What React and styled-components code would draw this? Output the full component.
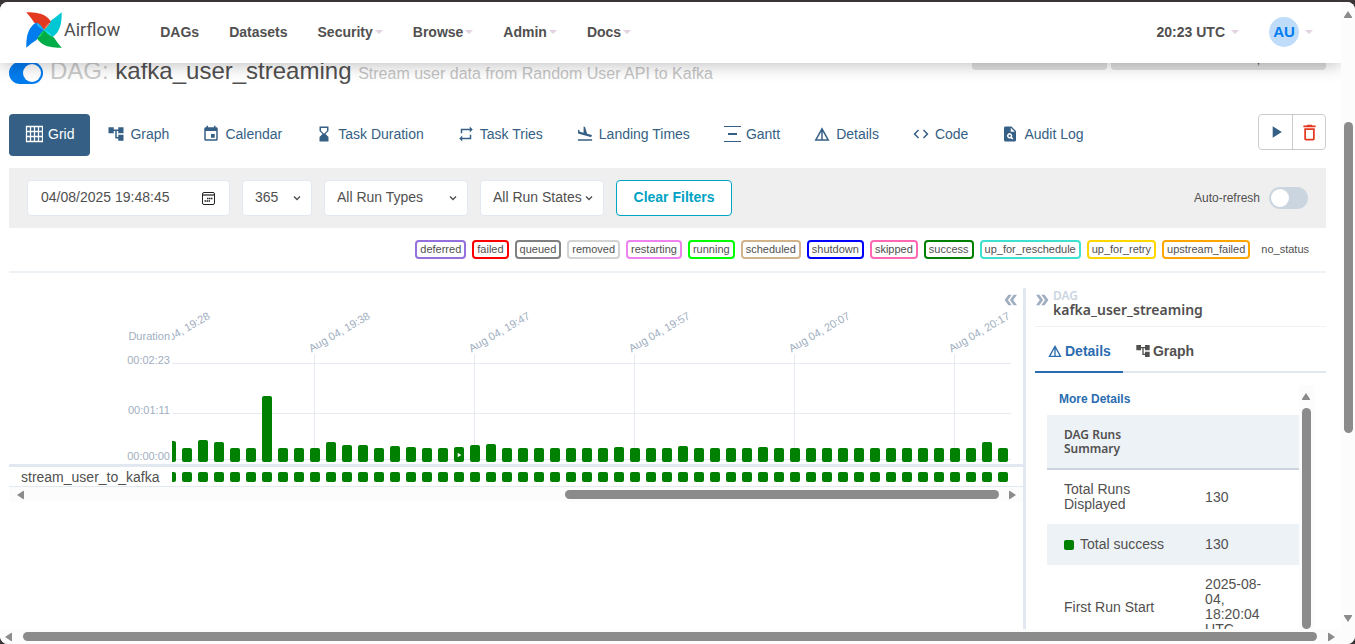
import React from "react";
import styled, { createGlobalStyle, css } from "styled-components";
import {
  MdAccountTree,
  MdEvent,
  MdHourglassBottom,
  MdRepeat,
  MdFlightLand,
  MdDetails,
  MdCode,
  MdPlagiarism,
  MdPlayArrow,
  MdDeleteOutline,
  MdDoubleArrow,
} from "react-icons/md";

const GlobalStyle = createGlobalStyle`
  *, *::before, *::after { box-sizing: border-box; }
  body {
    margin: 0;
    font-family: "Liberation Sans", Arial, sans-serif;
    font-size: 14px;
    line-height: 20px;
    color: #51504f;
    background: #3a3637;
  }
  button, input, select { font: inherit; color: inherit; }
`;

/* ---------- window frame and scrollbars ---------- */

const Frame = styled.div`
  height: 100vh;
  padding-top: 2px;
`;

const Window = styled.div`
  height: 100%;
  display: grid;
  grid-template: minmax(0, 1fr) 15px / minmax(0, 1fr) 14px;
  background: #fff;
  border-radius: 8px;
  overflow: hidden;
`;

const Page = styled.div`
  display: flex;
  flex-direction: column;
  overflow: hidden;
`;

const ScrollColumn = styled.div`
  display: flex;
  flex-direction: column;
  align-items: center;
  gap: ${(p) => p.$gap}px;
  padding: ${(p) => p.$pad};
  background: #fcfcfc;
`;

const ScrollRow = styled.div`
  display: flex;
  align-items: center;
  gap: ${(p) => p.$gap}px;
  height: 15px;
  padding: ${(p) => p.$pad};
  background: #fcfcfc;
  grid-column: ${(p) => p.$span || "auto"};
`;

const Track = styled.div`
  flex: 1;
  min-width: 0;
  display: grid;
  grid-template-${(p) => (p.$vertical ? "rows" : "columns")}: ${(p) => p.$parts};
`;

const Thumb = styled.div`
  min-width: 9px;
  min-height: 9px;
  border-radius: 5px;
  background: #8b8b8b;
  grid-${(p) => (p.$vertical ? "row" : "column")}: ${(p) => p.$cell};
`;

const ARROWS = {
  up: "M5 1 L9 7 Q9.500 8 8.500 8 H1.500 Q.5 8 1 7 Z",
  down: "M5 9 L9 3 Q9.500 2 8.500 2 H1.500 Q.5 2 1 3 Z",
  left: "M1 5 L7 1 Q8 .5 8 1.500 V8.500 Q8 9.500 7 9 Z",
  right: "M9 5 L3 1 Q2 .5 2 1.500 V8.500 Q2 9.500 3 9 Z",
};

const ArrowSvg = styled.svg`
  flex: none;
  display: block;
`;

const Arrow = ({ dir }) => (
  <ArrowSvg width="10" height="10" viewBox="0 0 10 10" aria-hidden="true">
    <path d={ARROWS[dir]} fill="#8b8b8b" />
  </ArrowSvg>
);

/* ---------- navigation bar ---------- */

const Navbar = styled.header`
  position: relative;
  z-index: 2;
  flex: none;
  display: flex;
  align-items: center;
  height: 61px;
  padding: 0 13px 2px 26px;
  background: #fff;
  box-shadow: 0 2px 16px rgba(0, 0, 0, 0.25);
`;

const Brand = styled.a`
  display: flex;
  align-items: center;
  align-self: flex-start;
  gap: 2px;
  margin-right: 25px;
  padding-top: 10px;
  color: #51504f;
  font: 18px/24px Roboto, sans-serif;
  text-decoration: none;
`;

const NavLinks = styled.nav`
  display: flex;
  flex: 1;
`;

const NavLink = styled.a`
  display: flex;
  align-items: center;
  gap: ${(p) => p.$gap || 2}px;
  padding: 0 15px;
  color: #51504f;
  font-weight: 700;
  text-decoration: none;
  white-space: nowrap;
`;

const Caret = styled.span`
  border: 4px solid transparent;
  border-top-color: #e2d2e2;
  border-bottom: 0;
`;

const Avatar = styled.span`
  display: flex;
  align-items: center;
  justify-content: center;
  width: 30px;
  height: 30px;
  border-radius: 50%;
  background: #bfddfb;
  color: #017cee;
  font-size: 15px;
`;

const BLADES = [
  ["#e43921", "#ff7557"],
  ["#00c7d4", "#11e1ee"],
  ["#00ad46", "#04d659"],
  ["#017cee", "#0cb6ff"],
];

const Pinwheel = () => (
  <svg width="36" height="36" viewBox="0 0 36 36" aria-hidden="true">
    {BLADES.map(([main, light], i) => (
      <g key={main} transform={`rotate(${i * 90} 18 18)`}>
        <path d="M18 18 L17 14.500 L25.400 10.500 Q24 14.500 18 18 Z" fill={light} />
        <path
          d="M.3 .3 C8 .2 15.500 1 20.500 4.800 C23 6.700 24.600 8.700 25.400 10.500 C21.500 11.500 19 14 18 18 C15 14.500 12 12.300 8 10.500 C6 7 3 3.500 .3 .3 Z"
          fill={main}
        />
      </g>
    ))}
  </svg>
);

/* ---------- page heading ---------- */

const Content = styled.main`
  flex: 1;
  min-height: 0;
  display: flex;
  flex-direction: column;
  padding: 0 15px 0 9px;
`;

const TitleRow = styled.div`
  flex: none;
  display: flex;
  align-items: center;
  gap: 7px;
  margin-top: -8px;
`;

const Title = styled.h1`
  flex: 1;
  margin: 0;
  font-size: 24px;
  line-height: 32px;
  font-weight: 400;
  white-space: nowrap;
`;

const Muted = styled.span`
  color: #cbcbcb;
`;

const Subtitle = styled.small`
  font-size: 16px;
  color: #c4c4c4;
`;

const Switch = styled.input.attrs({ type: "checkbox" })`
  appearance: none;
  flex: none;
  display: flex;
  align-items: center;
  width: ${(p) => p.$width}px;
  height: 22px;
  margin: 0;
  padding: 0 2px;
  border-radius: 11px;
  background: #cbd5e0;
  &::before {
    content: "";
    width: 18px;
    height: 18px;
    border-radius: 50%;
    background: #fff;
  }
  &:checked {
    justify-content: flex-end;
    background: #017cee;
  }
`;

const Chips = styled.div`
  display: flex;
  align-self: flex-start;
  gap: 4px;
`;

const Chip = styled.div`
  width: ${(p) => p.$width}px;
  height: 15px;
  padding: 0 66px 0 0;
  border-radius: 4px;
  background: #e0e0e0;
  font-size: 12px;
  line-height: 10px;
  text-align: right;
`;

/* ---------- view tabs ---------- */

const TabRow = styled.div`
  flex: none;
  display: flex;
  justify-content: space-between;
  align-items: flex-start;
  margin-top: 24px;
`;

const Tabs = styled.nav`
  display: flex;
  gap: 1px;
`;

const Tab = styled.a`
  display: flex;
  align-items: center;
  gap: 5px;
  height: 42px;
  padding: 0 16px 2px;
  border-radius: 4px;
  color: #355f84;
  text-decoration: none;
  white-space: nowrap;
  ${(p) =>
    p.$active &&
    css`
      background: #355f84;
      color: #fff;
    `}
`;

const ButtonGroup = styled.div`
  display: flex;
  border: 1px solid #cbcbcb;
  border-radius: 4px;
`;

const IconButton = styled.button`
  display: flex;
  align-items: center;
  justify-content: center;
  width: 33px;
  height: 34px;
  padding: 0;
  border: 0;
  background: none;
  color: ${(p) => p.$color};
  & + & {
    border-left: 1px solid #cbcbcb;
  }
`;

/* ---------- filters ---------- */

const FilterBar = styled.form`
  flex: none;
  display: flex;
  align-items: center;
  gap: 12px;
  height: 60px;
  margin-top: 12px;
  padding: 0 18px;
  background: #efefef;
`;

const Field = styled.div`
  position: relative;
  width: ${(p) => p.$width}px;
  height: 36px;
`;

const fieldBox = css`
  width: 100%;
  height: 100%;
  padding: 0 12px 2px;
  border: 1px solid #e2e8f0;
  border-radius: 4px;
  background: #fff;
`;

const DateInput = styled.input`
  ${fieldBox}
  padding-left: 13px;
`;

const Select = styled.select`
  ${fieldBox}
  appearance: none;
`;

const FieldIcon = styled.svg`
  position: absolute;
  top: 0;
  bottom: 0;
  right: ${(p) => p.$right}px;
  margin: auto 0;
  pointer-events: none;
`;

const ClearButton = styled.button`
  width: 116px;
  height: 36px;
  padding: 0 0 2px;
  border: 1px solid #00a3c4;
  border-radius: 4px;
  background: #fff;
  color: #00a3c4;
  font-weight: 700;
`;

const RefreshLabel = styled.label`
  display: flex;
  align-items: center;
  gap: 9px;
  margin-left: auto;
  font-size: 12px;
`;

const SelectField = ({ label, value, width }) => (
  <Field $width={width}>
    <Select aria-label={label} defaultValue={value}>
      <option>{value}</option>
    </Select>
    <FieldIcon $right={10} width="10" height="10" viewBox="0 0 10 10" aria-hidden="true">
      <path d="M2 3.500 L5 6.500 L8 3.500" fill="none" stroke="#51504f" strokeWidth="1.400" />
    </FieldIcon>
  </Field>
);

/* ---------- legend ---------- */

const Legend = styled.div`
  flex: none;
  display: flex;
  justify-content: flex-end;
  gap: 6px;
  padding: 12px;
  border-bottom: 2px solid #edf2f7;
`;

const State = styled.span`
  height: 19px;
  padding: 0 3px;
  border: 2px solid ${(p) => p.$color};
  border-radius: 4px;
  font-size: 11px;
  line-height: 15px;
  white-space: nowrap;
`;

const STATES = [
  ["deferred", "mediumpurple"],
  ["failed", "red"],
  ["queued", "gray"],
  ["removed", "lightgrey"],
  ["restarting", "violet"],
  ["running", "lime"],
  ["scheduled", "tan"],
  ["shutdown", "blue"],
  ["skipped", "hotpink"],
  ["success", "green"],
  ["up_for_reschedule", "turquoise"],
  ["up_for_retry", "gold"],
  ["upstream_failed", "orange"],
  ["no_status", "transparent"],
];

/* ---------- grid view ---------- */

const Split = styled.div`
  flex: 1;
  min-height: 0;
  display: flex;
  padding-top: 15px;
`;

const GridPanel = styled.section`
  position: relative;
  flex: 1;
  min-width: 0;
`;

const ToggleButton = styled.button`
  display: flex;
  padding: 0;
  border: 0;
  background: none;
  color: #a0aec0;
`;

const CollapseGrid = styled(ToggleButton)`
  position: absolute;
  top: 3px;
  right: 3px;
  transform: rotate(180deg);
`;

const ChartRow = styled.div`
  display: flex;
  height: 179px;
  border-bottom: 3px solid #e2e8f0;
`;

const Axis = styled.div`
  flex: none;
  width: 163px;
  padding: 41px 2px 0 0;
  color: #a0aec0;
  font-size: 11px;
  line-height: 14px;
  text-align: right;
`;

const AxisLabel = styled.div`
  margin-bottom: ${(p) => p.$after || 0}px;
`;

const Plot = styled.div`
  position: relative;
  flex: 1;
  min-width: 0;
  display: flex;
  justify-content: flex-end;
  align-items: flex-end;
  gap: 6px;
  margin-right: 12px;
  padding: 0 3px 2px 0;
  overflow: hidden;
`;

const GridLine = styled.div`
  position: absolute;
  left: 0;
  right: 0;
  top: ${(p) => p.$top}px;
  height: 1px;
  background: #e8eaf3;
`;

const Run = styled.div`
  position: relative;
  flex: none;
  display: flex;
  align-items: flex-end;
  width: 10px;
  height: 174px;
`;

const Bar = styled.div`
  position: relative;
  display: flex;
  align-items: center;
  justify-content: center;
  width: 10px;
  border-radius: 2px;
  background: green;
  color: #fff;
`;

const TickLine = styled.div`
  position: absolute;
  top: 66px;
  bottom: 0;
  left: 4px;
  width: 1px;
  background: #e8eaf3;
`;

const TickLabel = styled.div`
  position: absolute;
  left: 3px;
  bottom: 107px;
  transform: rotate(-30deg);
  transform-origin: left bottom;
  color: #a0aec0;
  font-size: 11px;
  line-height: 14px;
  white-space: nowrap;
`;

const TaskRow = styled.div`
  display: flex;
  height: 20px;
  border-bottom: 1px solid #e2e8f0;
`;

const TaskName = styled.div`
  flex: none;
  width: 163px;
  padding-left: 12px;
`;

const TaskCells = styled.div`
  flex: 1;
  min-width: 0;
  display: flex;
  justify-content: flex-end;
  gap: 6px;
  margin-right: 12px;
  padding: 5px 3px 0 0;
  overflow: hidden;
`;

const Cell = styled.span`
  flex: none;
  display: inline-block;
  width: 10px;
  height: 10px;
  border-radius: 2px;
  background: green;
`;

const RUN_HEIGHTS = [
  14, 21, 14, 22, 20, 14, 14, 66, 14, 14, 14, 20, 17, 17, 14, 16, 15, 14, 14, 15, 17, 18,
  14, 14, 14, 14, 14, 14, 14, 15, 14, 14, 14, 16, 14, 14, 14, 14, 15, 14, 14, 14, 14, 14,
  14, 14, 14, 14, 14, 14, 14, 14, 20, 14,
];

const TICKS = {
  0: "Aug 04, 19:28",
  10: "Aug 04, 19:38",
  20: "Aug 04, 19:47",
  30: "Aug 04, 19:57",
  40: "Aug 04, 20:07",
  50: "Aug 04, 20:17",
};

const MANUAL_RUN = 19;

/* ---------- details panel ---------- */

const Divider = styled.div`
  flex: none;
  width: 3px;
  background: #e2e8f0;
`;

const DetailsPanel = styled.aside`
  flex: none;
  display: flex;
  flex-direction: column;
  width: 300px;
  padding-left: 9px;
`;

const PanelHeader = styled.div`
  display: flex;
  align-items: flex-start;
  gap: 2px;
  height: 39px;
  border-bottom: 1px solid #edf2f7;
`;

const ExpandDetails = styled(ToggleButton)`
  margin-left: -2px;
  padding-top: 3px;
`;

const Crumb = styled.div`
  font-family: "Noto Sans", sans-serif;
  font-size: 12px;
  line-height: 15px;
  font-weight: 600;
  color: #cbd5e0;
`;

const DagName = styled.div`
  font-family: "Noto Sans", sans-serif;
  font-size: 14px;
  line-height: 14px;
  font-weight: 600;
`;

const PanelTabs = styled.div`
  display: flex;
  height: 46px;
  border-bottom: 2px solid #e2e8f0;
`;

const PanelTab = styled.button`
  display: flex;
  align-items: center;
  gap: 2px;
  height: 46px;
  padding: 4px 12px 0;
  border: 0;
  border-bottom: 2px solid ${(p) => (p.$active ? "#2b6cb0" : "transparent")};
  background: none;
  color: ${(p) => (p.$active ? "#2b6cb0" : "#51504f")};
  font-weight: 700;
`;

const PanelBody = styled.div`
  flex: 1;
  min-height: 0;
  display: flex;
  margin-top: 12px;
  padding: 0 12px;
  overflow: hidden;
`;

const PanelContent = styled.div`
  flex: 1;
  min-width: 0;
`;

const MoreLink = styled.a`
  display: block;
  height: 30px;
  padding: 0 12px;
  color: #2b6cb0;
  font-size: 12px;
  line-height: 28px;
  font-weight: 700;
  text-decoration: none;
`;

const Summary = styled.table`
  width: 100%;
  table-layout: fixed;
  border-collapse: collapse;
  line-height: 15px;
`;

const HeadCell = styled.th`
  height: 54px;
  padding: 0 12px 0 17px;
  border-bottom: 2px solid #cbd5e0;
  background: #edf2f7;
  font-family: "Noto Sans", sans-serif;
  font-size: 12px;
  line-height: 14px;
  font-weight: 600;
  text-align: left;
`;

const DataRow = styled.tr`
  background: ${(p) => (p.$striped ? "#edf2f7" : "#fff")};
`;

const DataCell = styled.td`
  height: 41px;
  padding: 12px 20px 12px 17px;
`;

const CellLabel = styled.span`
  display: flex;
  align-items: center;
  gap: 6px;
`;

const GridIcon = () => (
  <svg width="18" height="18" viewBox="0 0 18 18" aria-hidden="true">
    <path
      d="M1.500 1.500 H17.500 V16.500 H1.500 Z M5.500 1.500 V16.500 M9.500 1.500 V16.500 M13.500 1.500 V16.500 M1.500 6.500 H17.500 M1.500 11.500 H17.500"
      fill="none"
      stroke="currentColor"
      strokeWidth="1.300"
    />
  </svg>
);

const GanttIcon = () => (
  <svg width="18" height="18" viewBox="0 0 18 18" aria-hidden="true">
    <path d="M1 1.500 H18 M1 16.500 H18" stroke="currentColor" strokeWidth="1" />
    <path d="M5 9 H14" stroke="currentColor" strokeWidth="2" />
  </svg>
);

const TABS = [
  ["Grid", GridIcon],
  ["Graph", MdAccountTree],
  ["Calendar", MdEvent],
  ["Task Duration", MdHourglassBottom],
  ["Task Tries", MdRepeat],
  ["Landing Times", MdFlightLand],
  ["Gantt", GanttIcon],
  ["Details", MdDetails],
  ["Code", MdCode],
  ["Audit Log", MdPlagiarism],
];

export default function App() {
  return (
    <Frame>
      <GlobalStyle />
      <Window>
        <Page>
          <Navbar>
            <Brand href="#home">
              <Pinwheel />
              Airflow
            </Brand>
            <NavLinks>
              <NavLink href="#dags">DAGs</NavLink>
              <NavLink href="#datasets">Datasets</NavLink>
              {["Security", "Browse", "Admin", "Docs"].map((name) => (
                <NavLink key={name} href={`#${name.toLowerCase()}`}>
                  {name}
                  <Caret />
                </NavLink>
              ))}
            </NavLinks>
            <NavLink href="#timezone" $gap={6}>
              20:23 UTC
              <Caret />
            </NavLink>
            <NavLink href="#user" $gap={6}>
              <Avatar>AU</Avatar>
              <Caret />
            </NavLink>
          </Navbar>

          <Content>
            <TitleRow>
              <Switch $width={34} defaultChecked aria-label="Pause or unpause DAG" />
              <Title>
                <Muted>DAG:</Muted> kafka_user_streaming{" "}
                <Subtitle>Stream user data from Random User API to Kafka</Subtitle>
              </Title>
              <Chips>
                <Chip $width={135} />
                <Chip $width={215}>,</Chip>
              </Chips>
            </TitleRow>

            <TabRow>
              <Tabs>
                {TABS.map(([name, Icon], i) => (
                  <Tab key={name} href={`#${name}`} $active={i === 0}>
                    <Icon size={18} />
                    {name}
                  </Tab>
                ))}
              </Tabs>
              <ButtonGroup>
                <IconButton type="button" $color="#355f84" aria-label="Trigger DAG">
                  <MdPlayArrow size={20} />
                </IconButton>
                <IconButton type="button" $color="#e43921" aria-label="Delete DAG">
                  <MdDeleteOutline size={21} />
                </IconButton>
              </ButtonGroup>
            </TabRow>

            <FilterBar>
              <Field $width={203}>
                <DateInput aria-label="Base date" defaultValue="04/08/2025 19:48:45" />
                <FieldIcon $right={15} width="13" height="13" viewBox="0 0 13 13" aria-hidden="true">
                  <rect x=".5" y=".5" width="12" height="12" rx="1.500" fill="none" stroke="#222" />
                  <path d="M1 3 H12" stroke="#777" strokeWidth="2" />
                  <path
                    d="M5 6.500 H10.500 M2.500 9 H8"
                    stroke="#222"
                    strokeWidth="1.500"
                    strokeDasharray="1.500 .5"
                  />
                </FieldIcon>
              </Field>
              <SelectField label="Number of runs" value="365" width={70} />
              <SelectField label="Run type" value="All Run Types" width={144} />
              <SelectField label="Run state" value="All Run States" width={124} />
              <ClearButton type="button">Clear Filters</ClearButton>
              <RefreshLabel>
                Auto-refresh
                <Switch $width={39} />
              </RefreshLabel>
            </FilterBar>

            <Legend>
              {STATES.map(([name, color]) => (
                <State key={name} $color={color}>
                  {name}
                </State>
              ))}
            </Legend>

            <Split>
              <GridPanel>
                <ChartRow>
                  <Axis>
                    <AxisLabel $after={10}>Duration</AxisLabel>
                    <AxisLabel $after={36}>00:02:23</AxisLabel>
                    <AxisLabel $after={32}>00:01:11</AxisLabel>
                    <AxisLabel>00:00:00</AxisLabel>
                  </Axis>
                  <Plot>
                    <GridLine $top={75} />
                    <GridLine $top={125} />
                    <GridLine $top={171} />
                    {RUN_HEIGHTS.map((height, i) => (
                      <Run key={i}>
                        {TICKS[i] && <TickLine />}
                        {TICKS[i] && <TickLabel>{TICKS[i]}</TickLabel>}
                        <Bar style={{ height }}>{i === MANUAL_RUN && <MdPlayArrow size={8} />}</Bar>
                      </Run>
                    ))}
                  </Plot>
                </ChartRow>
                <TaskRow>
                  <TaskName>stream_user_to_kafka</TaskName>
                  <TaskCells>
                    {RUN_HEIGHTS.map((_, i) => (
                      <Cell key={i} />
                    ))}
                  </TaskCells>
                </TaskRow>
                <ScrollRow $gap={8} $pad="0 6px 0 7px">
                  <Arrow dir="left" />
                  <Track $parts="532fr 435fr">
                    <Thumb $cell={2} />
                  </Track>
                  <Arrow dir="right" />
                </ScrollRow>
                <CollapseGrid type="button" aria-label="Collapse grid">
                  <MdDoubleArrow size={18} />
                </CollapseGrid>
              </GridPanel>

              <Divider />

              <DetailsPanel>
                <PanelHeader>
                  <ExpandDetails type="button" aria-label="Hide details">
                    <MdDoubleArrow size={18} />
                  </ExpandDetails>
                  <div>
                    <Crumb>DAG</Crumb>
                    <DagName>kafka_user_streaming</DagName>
                  </div>
                </PanelHeader>
                <PanelTabs>
                  <PanelTab type="button" $active>
                    <MdDetails size={16} />
                    Details
                  </PanelTab>
                  <PanelTab type="button">
                    <MdAccountTree size={16} />
                    Graph
                  </PanelTab>
                </PanelTabs>
                <PanelBody>
                  <PanelContent>
                    <MoreLink href="#details">More Details</MoreLink>
                    <Summary>
                      <colgroup>
                        <col width="56%" />
                        <col width="44%" />
                      </colgroup>
                      <thead>
                        <tr>
                          <HeadCell>DAG Runs Summary</HeadCell>
                          <HeadCell />
                        </tr>
                      </thead>
                      <tbody>
                        <DataRow>
                          <DataCell>Total Runs Displayed</DataCell>
                          <DataCell>130</DataCell>
                        </DataRow>
                        <DataRow $striped>
                          <DataCell>
                            <CellLabel>
                              <Cell />
                              Total success
                            </CellLabel>
                          </DataCell>
                          <DataCell>130</DataCell>
                        </DataRow>
                        <DataRow>
                          <DataCell>First Run Start</DataCell>
                          <DataCell>2025-08-04, 18:20:04 UTC</DataCell>
                        </DataRow>
                      </tbody>
                    </Summary>
                  </PanelContent>
                  <ScrollColumn $gap={6} $pad="7px 3px 0 2px">
                    <Arrow dir="up" />
                    <Track $vertical $parts="1fr">
                      <Thumb $vertical $cell={1} />
                    </Track>
                  </ScrollColumn>
                </PanelBody>
              </DetailsPanel>
            </Split>
          </Content>
        </Page>

        <ScrollColumn $gap={5} $pad="8px 2px 6px">
          <Arrow dir="up" />
          <Track $vertical $parts="98fr 312fr 176fr">
            <Thumb $vertical $cell={2} />
          </Track>
          <Arrow dir="down" />
        </ScrollColumn>
        <ScrollRow $gap={9} $pad="0 19px 0 4px" $span="1 / -1">
          <Arrow dir="left" />
          <Track $parts="1fr">
            <Thumb $cell={1} />
          </Track>
          <Arrow dir="right" />
        </ScrollRow>
      </Window>
    </Frame>
  );
}
